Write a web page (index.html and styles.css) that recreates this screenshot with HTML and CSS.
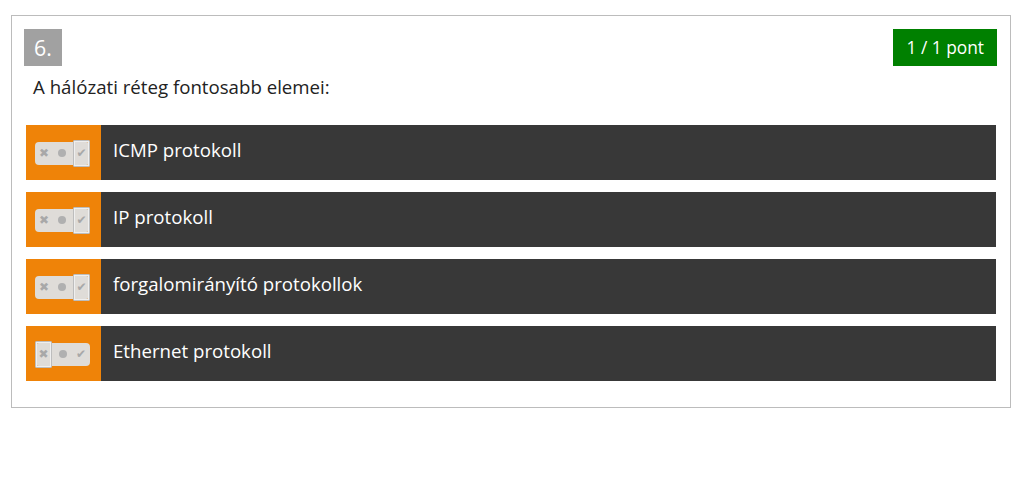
FILE: index.html
```html
<!DOCTYPE html>
<html lang="hu">
<head>
<meta charset="utf-8">
<link rel="stylesheet" href="styles.css">
</head>
<body>
<div class="card">
  <div class="head">
    <div class="num">6.</div>
    <div class="score">1 / 1 pont</div>
  </div>
  <div class="question">A hálózati réteg fontosabb elemei:</div>
  <div class="rows">
    <div class="row">
      <div class="tog-cell">
        <div class="toggle on-yes">
          <span class="t t-no">&#10006;</span><span class="t t-mid"></span><span class="t t-yes">&#10004;</span>
        </div>
      </div>
      <div class="label">ICMP protokoll</div>
    </div>
    <div class="row">
      <div class="tog-cell">
        <div class="toggle on-yes">
          <span class="t t-no">&#10006;</span><span class="t t-mid"></span><span class="t t-yes">&#10004;</span>
        </div>
      </div>
      <div class="label">IP protokoll</div>
    </div>
    <div class="row">
      <div class="tog-cell">
        <div class="toggle on-yes">
          <span class="t t-no">&#10006;</span><span class="t t-mid"></span><span class="t t-yes">&#10004;</span>
        </div>
      </div>
      <div class="label">forgalomirányító protokollok</div>
    </div>
    <div class="row">
      <div class="tog-cell">
        <div class="toggle on-no">
          <span class="t t-no">&#10006;</span><span class="t t-mid"></span><span class="t t-yes">&#10004;</span>
        </div>
      </div>
      <div class="label">Ethernet protokoll</div>
    </div>
  </div>
</div>
</body>
</html>
```
FILE: styles.css
```css
html, body {
  margin: 0;
  padding: 0;
  background: #fff;
}
body {
  font-family: "Open Sans", "Liberation Sans", sans-serif;
  color: #222;
}
.card {
  box-sizing: border-box;
  width: 1000px;
  margin: 15px 0 0 11px;
  border: 1px solid #bcbcbc;
  padding: 13px 13px 26px 12px;
}
.head {
  display: flex;
  justify-content: space-between;
  align-items: flex-start;
  height: 37px;
}
.num {
  width: 38px;
  height: 37px;
  background: #a1a1a1;
  color: #fff;
  font-size: 21.33px;
  line-height: 37px;
  text-align: center;
}
.score {
  height: 37px;
  padding: 0 13px;
  background: #008000;
  color: #fff;
  font-size: 17.33px;
  line-height: 37px;
}
.question {
  padding-left: 9px;
  margin-top: 7px;
  font-size: 18.67px;
  line-height: 28px;
}
.rows {
  display: flex;
  flex-direction: column;
  gap: 12px;
  margin: 24px 1px 0 2px;
}
.row {
  display: flex;
  height: 55px;
  background: #383838;
}
.tog-cell {
  width: 75px;
  flex: none;
  background: #ef8308;
  display: flex;
  align-items: center;
  padding-left: 9px;
  box-sizing: border-box;
}
.toggle {
  position: relative;
  width: 55px;
  height: 23px;
  border-radius: 4px;
  background: #dfdcd8;
  display: flex;
  align-items: center;
  margin-top: 1px;
}
.t {
  flex: 1;
  text-align: center;
  color: #a8a8a8;
  font-size: 12px;
  line-height: 23px;
  font-family: "DejaVu Sans", sans-serif;
}
.t-mid::before {
  content: "";
  display: inline-block;
  width: 8px;
  height: 8px;
  border-radius: 50%;
  background: #b0b0b0;
  vertical-align: middle;
}
.on-yes .t-yes,
.on-no .t-no {
  position: relative;
}
.on-yes .t-yes::after,
.on-no .t-no::after {
  content: "";
  position: absolute;
  top: -2px;
  bottom: -2px;
  left: 0;
  right: 0;
  border: 1px solid #bdbdbd;
  box-shadow: inset 0 0 0 1px #efefef;
  border-radius: 1px;
}
.on-yes .t-yes { flex: 0 0 17px; margin-left: 2px; }
.on-no .t-no { flex: 0 0 17px; margin-right: 2px; }
.label {
  display: flex;
  align-items: center;
  padding-left: 12px;
  padding-bottom: 6px;
  color: #fff;
  font-size: 18.67px;
}
```
